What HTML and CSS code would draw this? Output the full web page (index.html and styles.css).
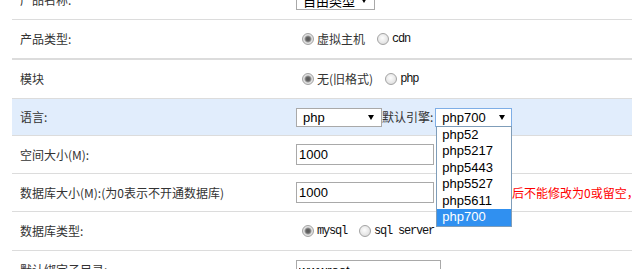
FILE: index.html
```html
<!DOCTYPE html>
<html lang="zh-CN">
<head>
  <meta charset="UTF-8">
  <title>产品设置</title>
  <link rel="stylesheet" href="styles.css">
</head>
<body>
  <div class="page">
    <table class="form">
      <colgroup><col class="col-label"><col></colgroup>
      <tr>
        <td class="label">产品名称:</td>
        <td><div class="ctl"><span class="select type">自由类型<i class="arrow"></i></span></div></td>
      </tr>
      <tr class="thick">
        <td class="label">产品类型:</td>
        <td><div class="ctl">
          <span class="radio"><i class="dot on"></i>虚拟主机</span>
          <span class="radio"><i class="dot"></i><span class="mono">cdn</span></span>
        </div></td>
      </tr>
      <tr>
        <td class="label">模块</td>
        <td><div class="ctl">
          <span class="radio"><i class="dot on"></i>无(旧格式)</span>
          <span class="radio"><i class="dot"></i><span class="mono">php</span></span>
        </div></td>
      </tr>
      <tr class="hl">
        <td class="label">语言:</td>
        <td><div class="ctl">
          <span class="select lang">php<i class="arrow"></i></span>
          <span class="engine-label">默认引擎:</span>
          <span class="select engine">php700<i class="arrow"></i>
            <ul class="options">
              <li>php52</li>
              <li>php5217</li>
              <li>php5443</li>
              <li>php5527</li>
              <li>php5611</li>
              <li class="sel">php700</li>
            </ul>
          </span>
        </div></td>
      </tr>
      <tr class="h37">
        <td class="label">空间大小(M):</td>
        <td><div class="ctl"><input class="text" type="text" value="1000"></div></td>
      </tr>
      <tr class="h37">
        <td class="label">数据库大小(M):(为0表示不开通数据库)</td>
        <td><div class="ctl">
          <input class="text" type="text" value="1000">
          <span class="tip">（注：开通后不能修改为0或留空，否则数据库将被删除）</span>
        </div></td>
      </tr>
      <tr>
        <td class="label">数据库类型:</td>
        <td><div class="ctl">
          <span class="radio"><i class="dot on"></i><span class="mono">mysql</span></span>
          <span class="radio"><i class="dot"></i><span class="mono">sql server</span></span>
        </div></td>
      </tr>
      <tr>
        <td class="label">默认绑定子目录:</td>
        <td><div class="ctl"><input class="text wide" type="text" value="wwwroot"></div></td>
      </tr>
    </table>
  </div>
</body>
</html>
```

FILE: styles.css
```css
html, body {
  margin: 0;
  overflow: hidden;
  background: #fff;
}
body {
  font-family: "Noto Sans CJK SC", sans-serif;
  font-size: 12px;
  line-height: 16px;
  color: #333;
}
.page {
  padding-left: 12px;
}
.form {
  width: 100%;
  table-layout: fixed;
  border-collapse: separate;
  border-spacing: 0;
  margin-top: -19px;
}
.col-label {
  width: 284px;
}
.form td {
  box-sizing: border-box;
  height: 39px;
  padding: 0;
  border-bottom: 1px solid #dcdcdc;
  vertical-align: middle;
  white-space: nowrap;
}
.form td.label {
  padding-left: 8px;
}
.form .thick td {
  height: 40px;
  border-bottom-width: 2px;
}
.form .h37 td {
  height: 38px;
}
.form .hl td {
  height: 37px;
  background: #e1edfc;
}
.ctl {
  display: flex;
  align-items: center;
}

/* fake selects */
.select {
  box-sizing: border-box;
  display: inline-flex;
  align-items: center;
  justify-content: space-between;
  height: 19px;
  padding: 0 7px 0 6px;
  border: 1px solid #a9a9a9;
  background: #fff;
  font: 13px "Liberation Sans", Arial, sans-serif;
  color: #000;
}
.select.type {
  width: 79px;
}
.select.lang {
  width: 86px;
}
.select.engine {
  position: relative;
  width: 77px;
  padding-right: 6px;
  border-color: #7eaee6;
}
.arrow {
  width: 0;
  height: 0;
  border-left: 3.5px solid transparent;
  border-right: 3.5px solid transparent;
  border-top: 5px solid #000;
}
.engine-label {
  margin-right: 2px;
}
.options {
  position: absolute;
  left: 0;
  top: 100%;
  z-index: 2;
  box-sizing: border-box;
  width: 76px;
  margin: 0;
  padding: 0;
  list-style: none;
  border: 1px solid #7f9db9;
  background: #fff;
}
.options li {
  height: 16.5px;
  line-height: 16.5px;
  padding-left: 5px;
}
.options .sel {
  background: #3090f0;
  color: #fff;
}

/* radios */
.radio {
  display: inline-flex;
  align-items: center;
  margin-right: 6px;
}
.dot {
  box-sizing: border-box;
  width: 12px;
  height: 12px;
  margin: 0 3px 0 6px;
  border: 1px solid #a3a3a3;
  border-radius: 50%;
  background: radial-gradient(circle at 45% 40%, #fdfdfd 0, #e6e6e6 60%, #cfcfcf 100%);
}
.dot.on {
  background: radial-gradient(circle at 50% 50%, #555 0, #666 2px, #9a9a9a 3px, #e4e4e4 4px, #d0d0d0 100%);
}
.mono {
  font-family: "Liberation Mono", monospace;
  font-size: 12px;
  letter-spacing: -1.2px;
  color: #111;
}

/* text inputs */
.text {
  box-sizing: border-box;
  width: 138px;
  height: 21px;
  margin: 0;
  padding: 0 2px;
  border: 1px solid #a9a9a9;
  font: 13px "Liberation Sans", Arial, sans-serif;
  color: #000;
}
.text.wide {
  width: 145px;
}
.tip {
  margin-left: 18px;
  color: #f00;
}
```
